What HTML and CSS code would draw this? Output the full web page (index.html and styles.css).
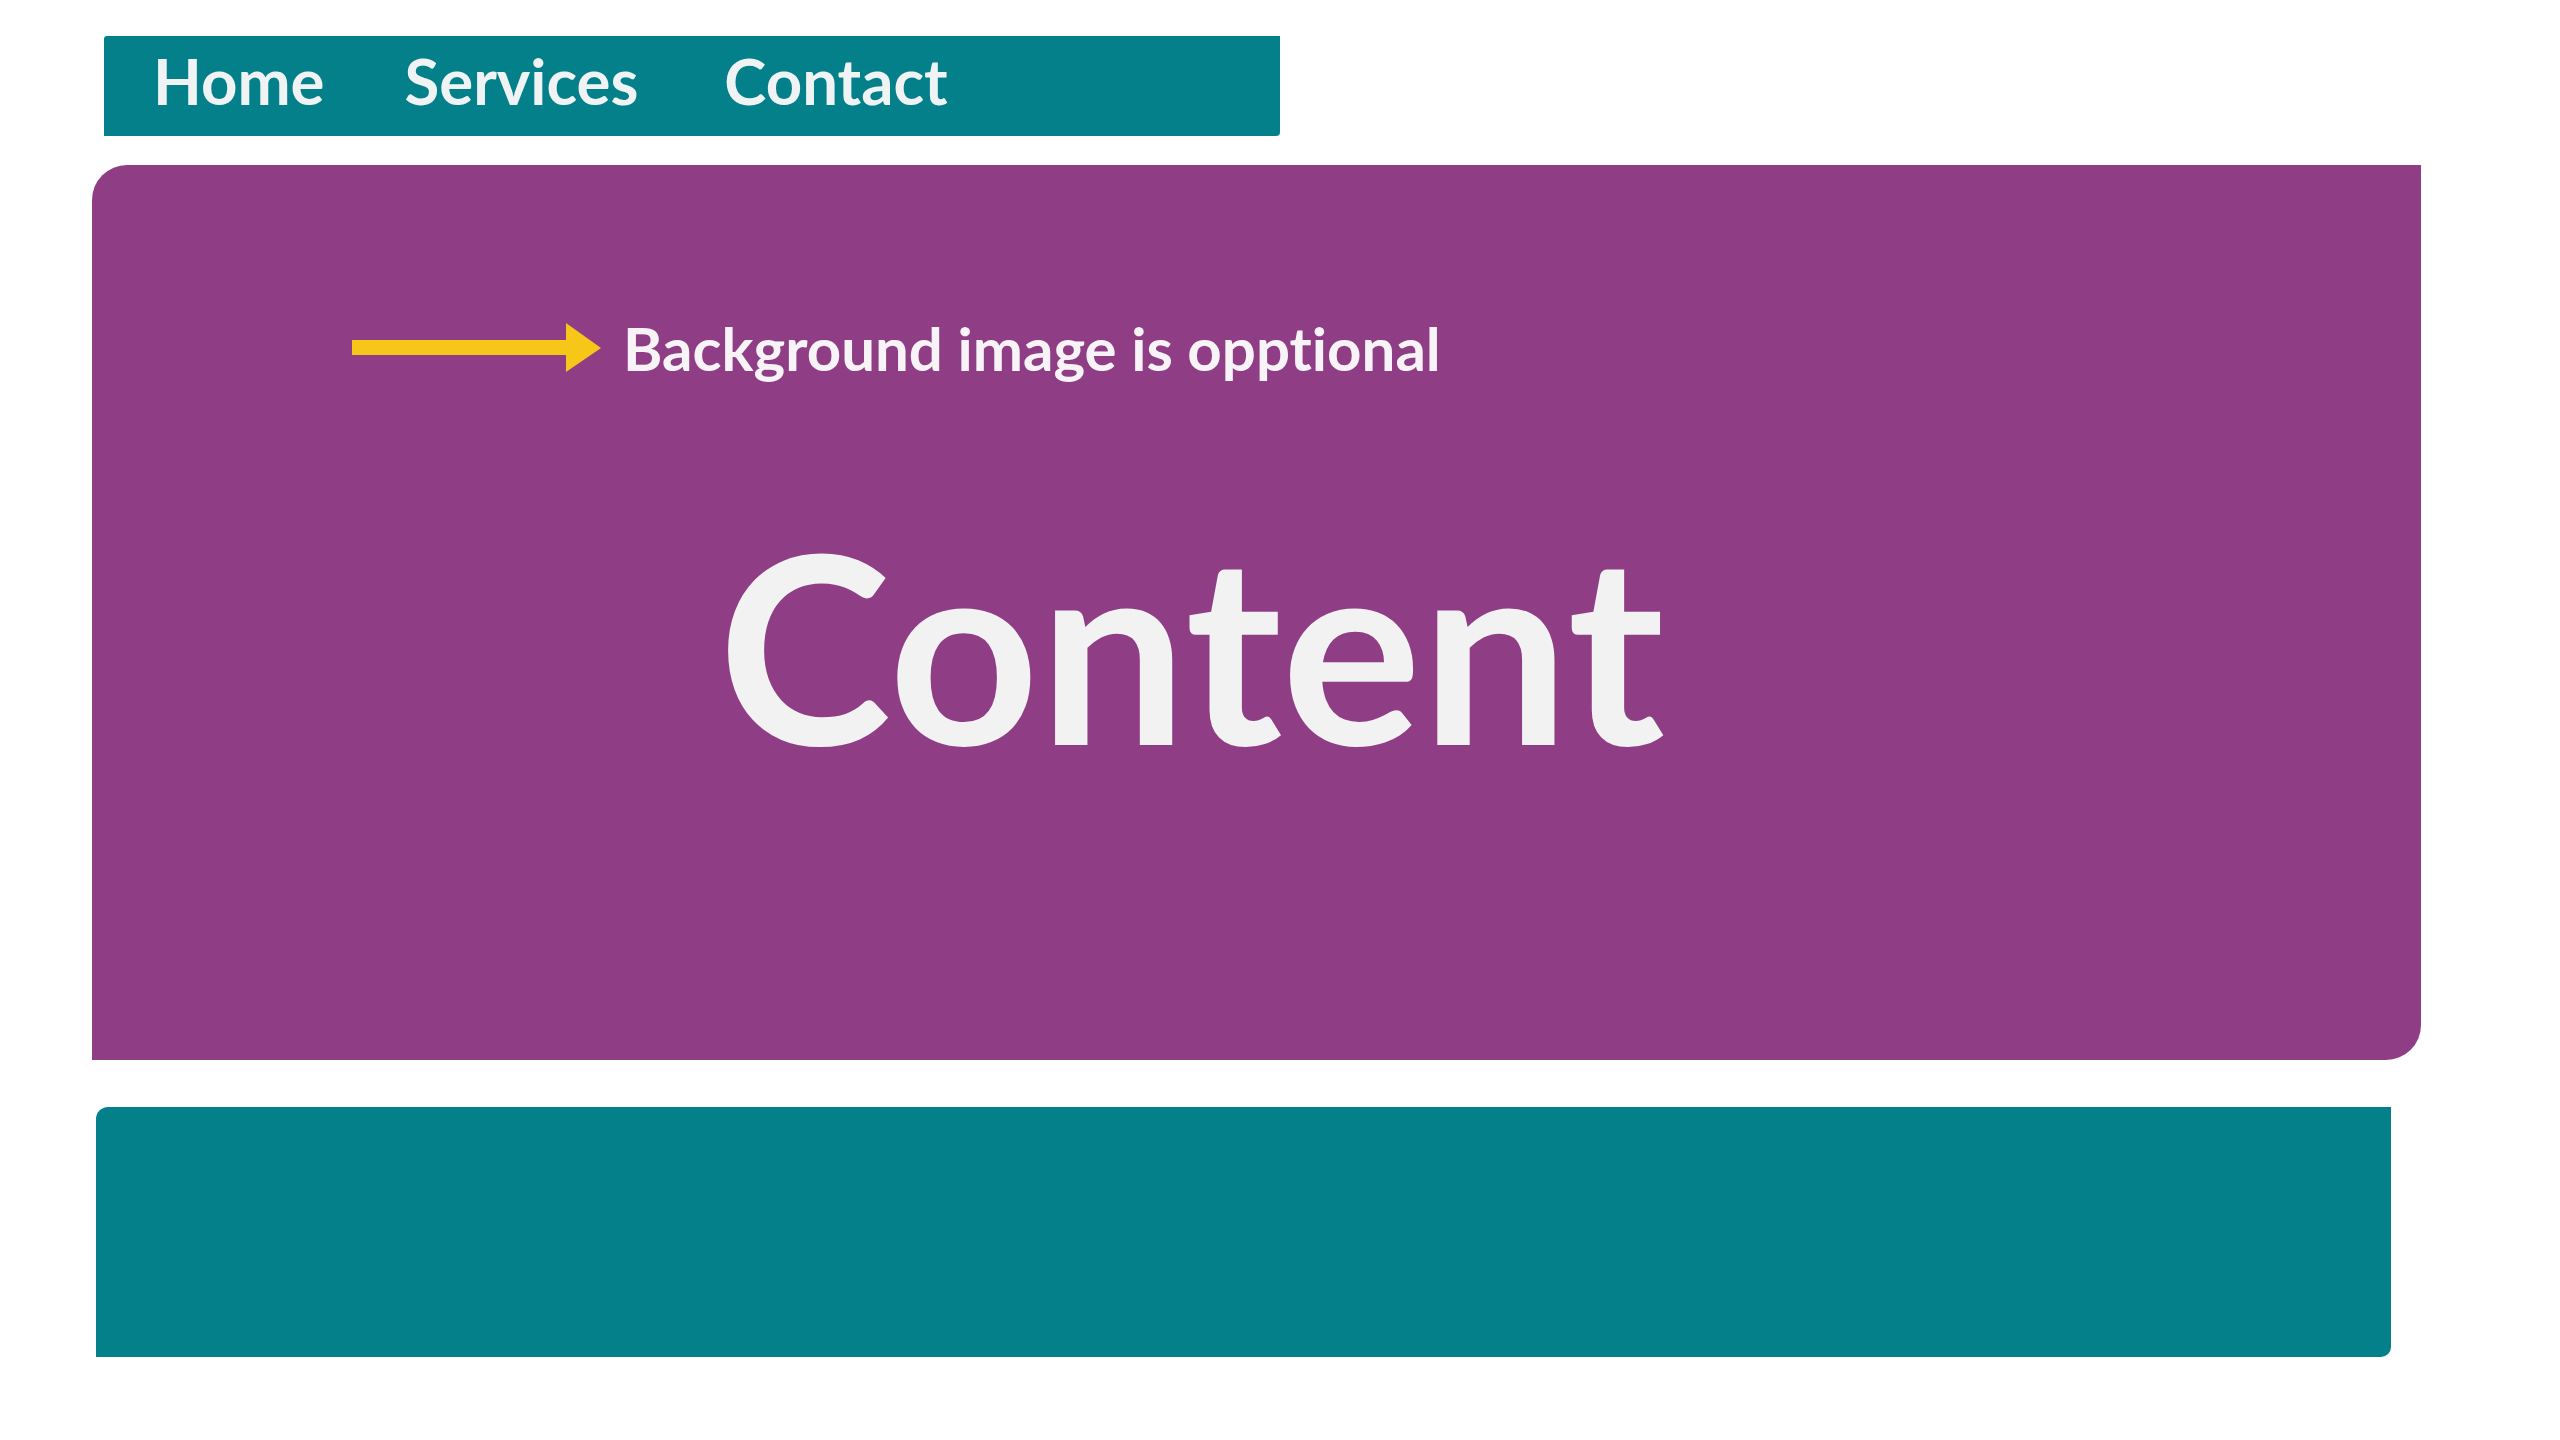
FILE: index.html
```html
<!DOCTYPE html>
<html lang="en">
<head>
<meta charset="utf-8">
<title>Layout</title>
<link rel="stylesheet" href="styles.css">
</head>
<body>
  <nav class="nav">
    <a class="nav-link nav-home">Home</a>
    <a class="nav-link nav-services">Services</a>
    <a class="nav-link nav-contact">Contact</a>
  </nav>
  <main class="hero">
    <div class="note">
      <svg class="arrow" width="250" height="50" viewBox="0 0 250 50" aria-hidden="true">
        <rect x="0" y="17" width="216" height="15" fill="#f6c619"/>
        <polygon points="214,0 249,25 214,49" fill="#f6c619"/>
      </svg>
      <span class="note-text">Background image is opptional</span>
    </div>
    <h1 class="content-title">Content</h1>
  </main>
  <footer class="footer"></footer>
</body>
</html>
```
FILE: styles.css
```css
html, body {
  margin: 0;
  padding: 0;
  background: #ffffff;
}

body {
  font-family: Lato, "Open Sans", "Liberation Sans", sans-serif;
  color: #f2f2f2;
  padding-top: 36px;
  font-variant-ligatures: none;
  font-feature-settings: "liga" 0, "dlig" 0;
}

.nav {
  margin-left: 104px;
  width: 1176px;
  height: 100px;
  box-sizing: border-box;
  background: #04808b;
  border-radius: 3px 0 4px 0;
  display: flex;
  align-items: flex-start;
  padding-top: 13px;
  padding-left: 49px;
  gap: 80px;
}

.nav-link {
  font-size: 63.5px;
  line-height: 1;
  font-weight: 700;
  color: #f0f3f3;
  text-decoration: none;
}

.nav-contact {
  margin-left: 6px;
}

.hero {
  margin-top: 29px;
  margin-left: 92px;
  width: 2329px;
  height: 895px;
  box-sizing: border-box;
  background: #8f3e86;
  border-radius: 35px 0 35px 0;
  padding-top: 153px;
  display: flex;
  flex-direction: column;
}

.note {
  display: flex;
  align-items: center;
  margin-left: 260px;
  gap: 21px;
}

.arrow {
  display: block;
  flex: none;
}

.note-text {
  font-size: 60px;
  line-height: 1;
  font-weight: 700;
  color: #f7f3f7;
}

.content-title {
  margin: 135px 0 0 0;
  padding-left: 626px;
  font-size: 262px;
  line-height: 1;
  font-weight: 700;
  color: #f2f2f2;
}

.footer {
  margin-top: 47px;
  margin-left: 96px;
  width: 2295px;
  height: 250px;
  background: #04808b;
  border-radius: 12px 0 10px 0;
}
```
